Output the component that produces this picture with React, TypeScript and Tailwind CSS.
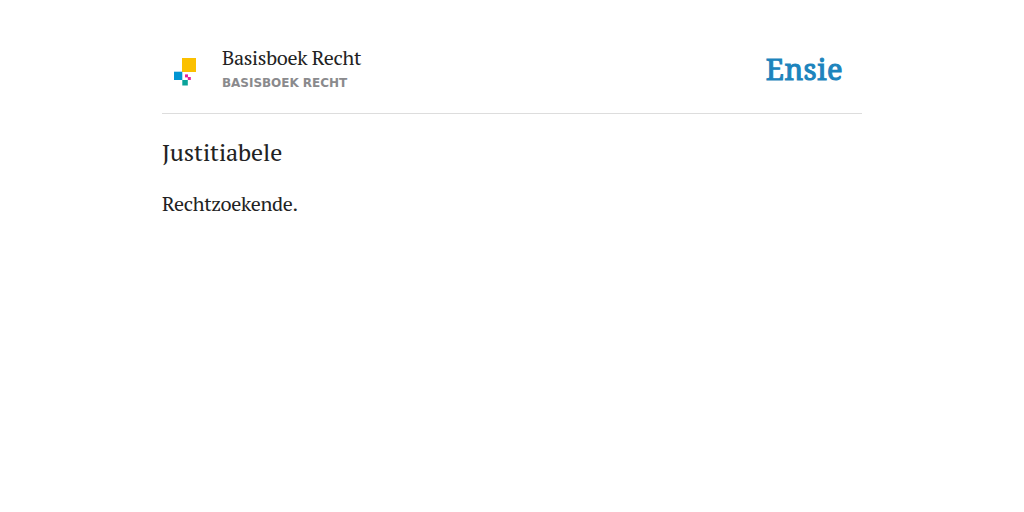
const serif = "font-['PT_Serif','Noto_Serif','Liberation_Serif',serif]";

function SourceLogo() {
  return (
    <svg width="50" height="50" viewBox="0 0 50 50" aria-hidden="true">
      <rect x="20" y="13" width="14" height="14" fill="#fbc000" />
      <rect x="12" y="26.7" width="8.3" height="8.3" fill="#0095d3" />
      <rect x="20.3" y="35" width="5.5" height="5.5" fill="#0aa39a" />
      <rect x="23" y="29.4" width="3" height="3" fill="#e5209a" />
      <rect x="25.8" y="32" width="3" height="3" fill="#e5209a" />
    </svg>
  );
}

export default function App() {
  return (
    <div className="min-h-screen bg-white text-[#222]">
      <div className="w-[700px] mx-auto pt-[45px]">
        <header className="flex justify-between h-[69px] border-b border-[#ddd]">
          <div className="flex">
            <SourceLogo />
            <div className="ml-[10px]">
              <div className={`${serif} text-[20px] tracking-[-0.32px] leading-[26px]`}>Basisboek Recht</div>
              <div className="font-['DejaVu_Sans',sans-serif] text-[12px] tracking-[-0.04px] leading-[24px] font-bold uppercase text-[#8a8a8d]">
                Basisboek Recht
              </div>
            </div>
          </div>
          <div className="font-['Noto_Serif',serif] mr-[19px] text-[29px] tracking-[0.5px] leading-[47px] text-[#1c84bd] [-webkit-text-stroke:1.1px_#1c84bd]">
            Ensie
          </div>
        </header>
        <h1 className={`${serif} mt-[21px] text-[24px] tracking-[-0.08px] leading-[34px]`}>Justitiabele</h1>
        <p className={`${serif} mt-[20px] text-[20px] tracking-[-0.32px] leading-[30px]`}>Rechtzoekende.</p>
      </div>
    </div>
  );
}
